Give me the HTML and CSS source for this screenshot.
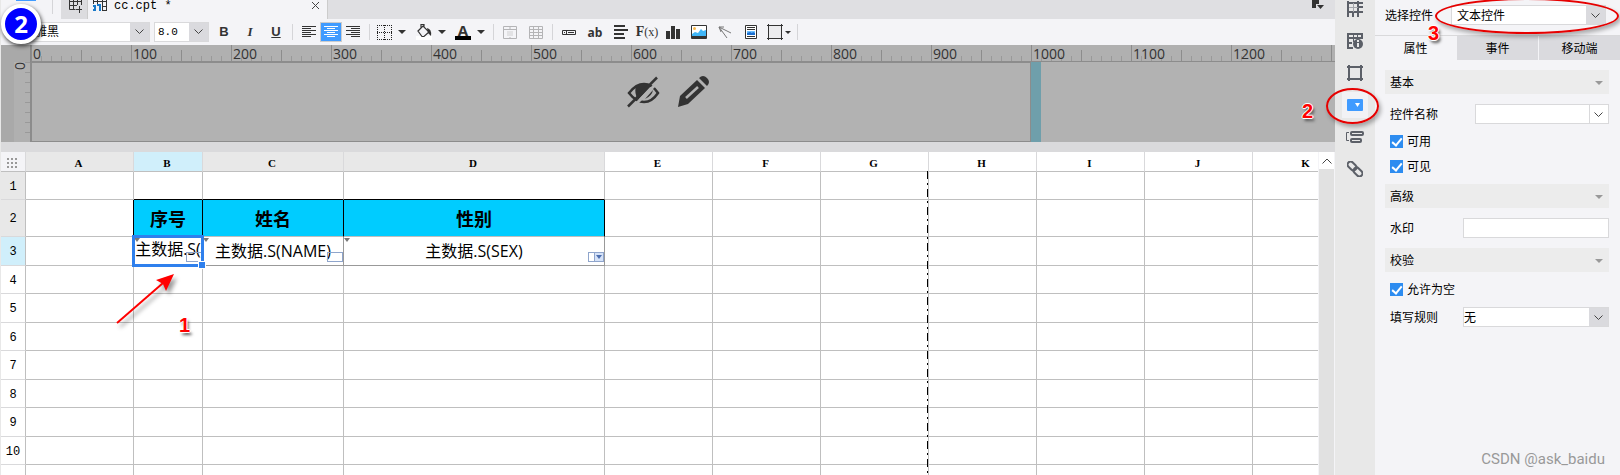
FILE: index.html
```html
<!DOCTYPE html>
<html lang="zh-CN">
<head>
	<meta charset="UTF-8">
	<title>cc.cpt</title>
	<link rel="stylesheet" href="styles.css">
</head>
<body>
	<div class="app">
		<main class="work">
			<div class="tabs">
				<span class="tab-line"><i></i></span>
				<button class="tab-new" aria-label="新建">
					<svg width="16" height="14" viewBox="0 0 16 14" fill="none" stroke="#333"><path d="M1.500 0v9.500h6M1 1.500h12.500M1 5.500h8M5.500 0v10M9.500 0v5M13.500 0v5M11.500 6v7M8 9.500h6"/></svg>
				</button>
				<div class="tab">
					<svg width="14" height="12" viewBox="0 0 14 12" fill="none" stroke="#333"><path d="M1 1.500h12.500M4.500 0v4M9.500 0v11M13.500 0v11M.5 0v4M9 6.500h4M9 10.500h4"/><path d="M0 6h2v4h-2M4 5h3v6" stroke="#1979c8" stroke-width="2"/></svg>
					<span class="tab-name">cc.cpt *</span>
					<button class="tab-close" aria-label="关闭"><svg width="9" height="9" viewBox="0 0 9 9" stroke="#444"><path d="M1 1l7 7M8 1l-7 7"/></svg></button>
				</div>
				<svg class="tab-more" width="12" height="9" viewBox="0 0 12 9" fill="#333"><path d="M0 0h7v4h-3v4h-4zM5 5h7l-3.500 4z"/></svg>
			</div>
			<div class="toolbar">
				<button class="combo font" aria-label="字体"><span>雅黑</span><i><svg width="9" height="6" viewBox="0 0 9 6"><path d="M.5 .5l4 4 4-4"/></svg></i></button>
				<button class="combo size" aria-label="字号"><span>8.0</span><i><svg width="9" height="6" viewBox="0 0 9 6"><path d="M.5 .5l4 4 4-4"/></svg></i></button>
				<button class="tool b">B</button>
				<button class="tool i">I</button>
				<button class="tool u">U</button>
				<span class="sep"></span>
				<div class="aligns">
					<button class="tool al" aria-label="左对齐"><svg width="14" height="12" viewBox="0 0 14 12"><path d="M0 .5h14M0 2.500h9M0 4.500h14M0 6.500h9M0 8.500h14M0 10.500h9"/></svg></button>
					<button class="tool al on" aria-label="居中"><svg width="14" height="12" viewBox="0 0 14 12"><path d="M0 .5h14M3 2.500h8M0 4.500h14M3 6.500h8M0 8.500h14M3 10.500h8"/></svg></button>
					<button class="tool al" aria-label="右对齐"><svg width="14" height="12" viewBox="0 0 14 12"><path d="M0 .5h14M5 2.500h9M0 4.500h14M5 6.500h9M0 8.500h14M5 10.500h9"/></svg></button>
				</div>
				<span class="sep"></span>
				<button class="tool drop" aria-label="边框"><svg width="15" height="15" viewBox="0 0 15 15" fill="none" stroke="#222"><path d="M0 .5h15M0 14.500h15M.5 0v15M14.500 0v15M7.500 0v15M0 7.500h15" stroke-dasharray="1 1"/></svg><b class="arr"></b></button>
				<button class="tool drop" aria-label="背景"><svg width="16" height="16" viewBox="0 0 16 16" fill="none" stroke="#333"><path d="M0 12h16v4h-16z" fill="#fff" stroke="none"/><path d="M2 7l5-5 6 6-5 4.500h-2zM5 5V.5h3V4" stroke-width="1.200"/><path d="M11 4q5 1 4 8l-3-3z" fill="#333" stroke="none"/></svg><b class="arr"></b></button>
				<button class="tool drop fore" aria-label="字体颜色"><span>A</span><b class="arr"></b></button>
				<span class="sep"></span>
				<button class="tool" aria-label="合并"><svg width="14" height="13" viewBox="0 0 14 13" fill="none" stroke="#b4b4b6"><path d="M.5 .5h13v12h-13zM0 3.500h14M7 0v3M7 11v2"/><path d="M4 5h6v5h-6z" fill="#e2e2e4" stroke="none"/></svg></button>
				<button class="tool" aria-label="取消合并"><svg width="14" height="13" viewBox="0 0 14 13" fill="none" stroke="#b4b4b6"><path d="M.5 .5h13v12h-13zM0 3.500h14M0 6.500h14M0 9.500h14M4.500 0v13M9.500 0v13"/></svg></button>
				<span class="sep"></span>
				<button class="tool" aria-label="控件"><svg width="14" height="5" viewBox="0 0 14 5" fill="none" stroke="#333"><path d="M.5 .5h13v4h-13zM4.500 0v5M6 2.500h6M2 2.500h1"/></svg></button>
				<button class="tool ab">ab</button>
				<button class="tool" aria-label="富文本"><svg width="14" height="14" viewBox="0 0 14 14" stroke="#333" stroke-width="2"><path d="M0 1h11M0 5h14M0 9h10M0 13h11"/></svg></button>
				<button class="tool fx">F<small>(x)</small></button>
				<button class="tool" aria-label="图表"><svg width="14" height="13" viewBox="0 0 14 13" fill="#333"><path d="M0 5h4v8h-4zM5 0h4v13h-4zM10 3h4v10h-4z"/></svg></button>
				<button class="tool" aria-label="图片"><svg width="16" height="14" viewBox="0 0 16 14"><path d="M.5 .5h15v13h-15z" fill="#fff" stroke="#333"/><path d="M1 9l3-2 3 1 3-4 2 2 3-1v6h-14z" fill="#3fb6f8"/><path d="M1 11h14v2h-14z" fill="#333"/><circle cx="3.500" cy="3.500" r="1.500" fill="#f8b84a"/></svg></button>
				<button class="tool" aria-label="斜线"><svg width="14" height="13" viewBox="0 0 14 13" fill="none" stroke="#777"><path d="M1 1l12 6M1 1l8 11M1 1l2 5M1 1l5 0"/></svg></button>
				<button class="tool" aria-label="子报表"><svg width="12" height="14" viewBox="0 0 12 14" fill="none" stroke="#333"><path d="M.5 .5h11v13h-11z" fill="#fff"/><path d="M2 2.500h8M2 4.500h8M2 11.500h8"/><path d="M2 6h8v4h-8z" fill="#6cc0ff" stroke="none"/><path d="M2 10v-2l3-1 2 1 1-1 2 1v2z" fill="#1c6fd0" stroke="none"/></svg></button>
				<button class="tool frame" aria-label="悬浮元素"><svg width="16" height="16" viewBox="0 0 16 16" fill="none" stroke="#333"><path d="M2 2h12v12h-12z" fill="#ececee" stroke="none"/><path d="M1.500 0v16M14.500 0v16M0 1.500h16M0 14.500h16"/></svg><b class="arr"></b></button>
				<span class="sep"></span>
			</div>
			<div class="canvas">
				<div class="corner"></div>
				<div class="ruler-x">
					<span>0</span><span>100</span><span>200</span><span>300</span><span>400</span><span>500</span><span>600</span><span>700</span><span>800</span><span>900</span><span>1000</span><span>1100</span><span>1200</span>
				</div>
				<div class="ruler-y"><span>0</span></div>
				<div class="body-area">
					<div class="paper">
						<svg width="33" height="32" viewBox="0 0 33 32" fill="none" stroke="#333" stroke-width="2.500"><path d="M2 17Q9 8 17 8T31 17Q25 26 17 26T2 17z"/><path d="M9 10Q17 5 24 10L11 24Q7 17 9 10zM26 14Q25 20 18 23z" fill="#333" stroke="none"/><path d="M4 33L33 4" stroke="#b2b2b2" stroke-width="3"/><path d="M1 30.500L30 1.500"/></svg>
						<svg width="31" height="31" viewBox="0 0 31 31" fill="#333"><path d="M0 31l2-11L19 4l8 8L10 28zM21 2q4-4 8 0t0 8z"/><path d="M8 22L20 11" stroke="#b2b2b2" stroke-width="2.500"/></svg>
					</div>
					<div class="edge"></div>
				</div>
			</div>
			<div class="sheet">
				<div class="grid">
					<table>
						<colgroup><col class="c-num"><col><col class="c-b"><col class="c-c"><col class="c-d"><col><col><col><col><col><col><col></colgroup>
						<thead>
							<tr><th class="all"><i></i></th><th class="used">A</th><th class="cur">B</th><th class="used">C</th><th class="used">D</th><th>E</th><th>F</th><th>G</th><th>H</th><th>I</th><th>J</th><th>K</th></tr>
						</thead>
						<tbody>
							<tr class="short"><th class="used">1</th><td></td><td class="over"></td><td class="over"></td><td class="over"></td><td></td><td></td><td></td><td></td><td></td><td></td><td></td></tr>
							<tr class="title"><th class="used">2</th><td class="pre"></td><td class="head">序号</td><td class="head">姓名</td><td class="head">性别</td><td></td><td></td><td></td><td></td><td></td><td></td><td></td></tr>
							<tr><th class="cur">3</th><td></td><td class="data sel">主数据.S(<i class="ext"></i><i class="box"></i><i class="knob"></i></td><td class="data">主数据.S(NAME)<i class="ext"></i><i class="box"></i></td><td class="data">主数据.S(SEX)<i class="ext"></i><i class="box list"></i></td><td></td><td></td><td></td><td></td><td></td><td></td><td></td></tr>
							<tr class="short"><th>4</th><td></td><td></td><td></td><td></td><td></td><td></td><td></td><td></td><td></td><td></td><td></td></tr>
							<tr><th>5</th><td></td><td></td><td></td><td></td><td></td><td></td><td></td><td></td><td></td><td></td><td></td></tr>
							<tr class="short"><th>6</th><td></td><td></td><td></td><td></td><td></td><td></td><td></td><td></td><td></td><td></td><td></td></tr>
							<tr><th>7</th><td></td><td></td><td></td><td></td><td></td><td></td><td></td><td></td><td></td><td></td><td></td></tr>
							<tr class="short"><th>8</th><td></td><td></td><td></td><td></td><td></td><td></td><td></td><td></td><td></td><td></td><td></td></tr>
							<tr><th>9</th><td></td><td></td><td></td><td></td><td></td><td></td><td></td><td></td><td></td><td></td><td></td></tr>
							<tr class="short"><th>10</th><td></td><td></td><td></td><td></td><td></td><td></td><td></td><td></td><td></td><td></td><td></td></tr>
							<tr><th></th><td></td><td></td><td></td><td></td><td></td><td></td><td></td><td></td><td></td><td></td><td></td></tr>
						</tbody>
					</table>
					<svg class="page-break" width="1" height="304"><path d="M.5 0v304" stroke="#000" stroke-dasharray="8 4 2 4"/></svg>
				</div>
				<div class="scroll"><button aria-label="向上"><svg width="10" height="6" viewBox="0 0 10 6"><path d="M.5 5.500l4.500-4.500 4.500 4.500"/></svg></button></div>
			</div>
		</main>
		<nav class="side">
			<button aria-label="单元格元素"><svg width="16" height="16" viewBox="0 0 16 16" fill="none" stroke="#5c6068" stroke-width="2"><path d="M1 0v16M0 2h16M0 11h16M11 0v16M11 6h5M6 11v5"/><path d="M6.500 2v9M2 6.500h9" stroke="#a4a6ab" stroke-width="1"/></svg></button>
			<button aria-label="单元格属性"><svg width="17" height="17" viewBox="0 0 17 17" fill="none" stroke="#5c6068" stroke-width="2"><path d="M6 15H1V1h14v5M1 5h13M1 10h4"/><path d="M6.500 1v8M10.500 1v4" stroke-width="1"/><circle cx="11" cy="11" r="5" fill="#5c6068" stroke="none"/><path d="M11 7v2M11 10v4" stroke="#e8e8e8"/></svg></button>
			<button aria-label="悬浮元素"><svg width="16" height="16" viewBox="0 0 16 16" fill="none" stroke="#5c6068" stroke-width="2"><path d="M2 2h12v12h-12z"/><path d="M0 2h4M2 0v4M12 2h4M14 0v4M0 14h4M2 12v4M12 14h4M14 12v4"/></svg></button>
			<button class="on" aria-label="控件设置"><svg width="16" height="12" viewBox="0 0 16 12"><rect width="16" height="12" rx="1" fill="#409bff"/><path d="M8 4h5l-2.500 4z" fill="#fff"/></svg></button>
			<button aria-label="条件属性"><svg width="18" height="14" viewBox="0 0 18 14" fill="none" stroke="#5c6068" stroke-width="2"><path d="M3 2.500H.5v8H3" stroke-width="1"/><rect x="5" y="2" width="12" height="3" rx="1"/><rect x="5" y="9" width="10" height="3" rx="1"/></svg></button>
			<button aria-label="超级链接"><svg width="16" height="16" viewBox="0 0 16 16" fill="none" stroke="#5c6068" stroke-width="2"><rect x="0" y="2" width="10" height="6" rx="3" transform="rotate(45 5 5)"/><rect x="6" y="8" width="10" height="6" rx="3" transform="rotate(45 11 11)"/></svg></button>
		</nav>
		<aside class="panel">
			<div class="choose">
				<label for="kind">选择控件</label>
				<div class="pick"><select id="kind"><option>文本控件</option></select><svg width="9" height="6" viewBox="0 0 9 6"><path d="M.5 .5l4 4 4-4"/></svg></div>
			</div>
			<div class="ptabs"><button class="on">属性</button><button>事件</button><button>移动端</button></div>
			<div class="props">
				<h3>基本<b class="arr"></b></h3>
				<div class="row"><label for="wname">控件名称</label><div class="pick name"><input id="wname" type="text"><svg width="9" height="6" viewBox="0 0 9 6"><path d="M.5 .5l4 4 4-4"/></svg></div></div>
				<label class="check"><input type="checkbox" checked>可用</label>
				<label class="check"><input type="checkbox" checked>可见</label>
				<h3>高级<b class="arr"></b></h3>
				<div class="row"><label for="mark">水印</label><input class="mark" id="mark" type="text"></div>
				<h3>校验<b class="arr"></b></h3>
				<label class="check"><input type="checkbox" checked>允许为空</label>
				<div class="row"><label for="rule">填写规则</label><div class="pick rule"><select id="rule"><option>无</option></select><svg width="9" height="6" viewBox="0 0 9 6"><path d="M.5 .5l4 4 4-4"/></svg></div></div>
			</div>
			<div class="watermark">CSDN @ask_baidu</div>
		</aside>
		<!-- 标注 -->
		<div class="badge">2</div>
		<svg class="note arrow" width="70" height="60" viewBox="0 0 70 60"><path d="M2 53L48 13" stroke="#f00" stroke-width="2"/><path d="M59 4l-8 17-3-7-7-4z" fill="#f00"/></svg>
		<span class="note num n1">1</span>
		<div class="note oval o2"></div>
		<span class="note num n2">2</span>
		<div class="note oval o3"></div>
		<span class="note num n3">3</span>
	</div>
</body>
</html>
```

FILE: styles.css
```css
* {
	margin: 0;
	padding: 0;
	box-sizing: border-box;
}
body {
	font: 12px/16px "Liberation Sans", "Noto Sans CJK SC", sans-serif;
	color: #000;
	overflow: hidden;
}
button, input, select {
	font: inherit;
	color: inherit;
	border: 0;
	background: none;
	border-radius: 0;
	appearance: none;
	outline: 0;
}
.app {
	position: relative;
	display: flex;
	height: 100vh;
	overflow: hidden;
	background: #f4f4f7;
}
.work {
	flex: 1;
	min-width: 0;
	display: flex;
	flex-direction: column;
	border-left: 1px solid #e8e8e8;
}
/* 文件标签 */
.tabs {
	display: flex;
	height: 19px;
	flex: none;
	background: #dfdfe2;
}
.tab-line {
	width: 60px;
	padding: 0 8px 0 15px;
	background: #f4f4f7;
}
.tab-line i {
	display: block;
	height: 14px;
	border-right: 1px solid #d5d5d8;
	background: linear-gradient(#409bff, #409bff) 0 0 / 20px 1px no-repeat;
}
.tab-new {
	width: 27px;
	display: flex;
	justify-content: center;
	padding-left: 4px;
	background: #dcdcdf;
	border-right: 1px solid #ccc;
}
.tab {
	width: 240px;
	display: flex;
	padding: 0 7px 0 5px;
	background: #f4f4f7;
	border-right: 1px solid #ccc;
}
.tab-name {
	flex: 1;
	padding-left: 7px;
	font: 12px/12px "Liberation Mono", monospace;
}
.tab-close {
	height: 10px;
}
.tab svg, .tab-more {
	display: block;
}
.tab-more {
	margin: 0 11px 0 auto;
}
/* 工具栏 */
.toolbar {
	display: flex;
	align-items: center;
	height: 26px;
	flex: none;
	padding-left: 14px;
}
.combo {
	display: flex;
	height: 20px;
	border: 1px solid #d9d9db;
	background: #fff;
	text-align: left;
}
.combo span {
	flex: 1;
	line-height: 18px;
}
.combo i {
	width: 19px;
	display: flex;
	align-items: center;
	justify-content: center;
	background: #dadade;
}
.combo path, .pick path, .scroll path {
	fill: none;
	stroke: #444;
}
.font {
	width: 135px;
	margin-right: 4px;
}
.font span {
	padding-left: 19px;
}
.size {
	width: 55px;
	margin-right: 2px;
}
.size span {
	padding-left: 3px;
	font: 11px/18px "Liberation Mono", monospace;
}
.tool {
	display: flex;
	flex: none;
	align-items: center;
	justify-content: center;
	width: 26px;
	height: 20px;
	color: #333;
}
.b {
	font-weight: bold;
	font-size: 13px;
}
.i {
	font: italic bold 13px "Liberation Serif", serif;
}
.u {
	text-decoration: underline;
	font-size: 13px;
	font-weight: bold;
}
.sep {
	width: 1px;
	height: 16px;
	margin: 0 3px;
	background: #d5d5d8;
}
.aligns {
	display: flex;
	padding: 0 2px;
}
.al {
	width: 22px;
}
.al path {
	stroke: #333;
}
.al.on {
	background: #409bff;
	border: 1px solid #ccc;
}
.al.on path {
	stroke: #fff;
}
.drop {
	width: 39px;
	gap: 6px;
	justify-content: flex-start;
	padding-left: 4px;
}
.arr {
	border: 4px solid transparent;
	border-top-color: #333;
	border-bottom: 0;
}
.fore span {
	width: 16px;
	border-bottom: 4px solid #000;
	font: bold 15px/12px "Open Sans", sans-serif;
}
.ab {
	font: bold 12px "Open Sans", sans-serif;
}
.fx {
	font: bold 14px "Liberation Serif", serif;
}
.fx small {
	font-size: 12px;
	font-weight: normal;
}
.frame {
	width: 30px;
	gap: 2px;
}
.frame .arr {
	border-width: 3px 3px 0;
}
/* 标尺和画布 */
.canvas {
	display: grid;
	grid-template-columns: 30px 1fr;
	grid-template-rows: 17px 80px;
	flex: none;
	background: #b2b2b2;
	color: #333;
	overflow: hidden;
}
.corner {
	background: #a9a9a9;
	border-right: 1px solid #888;
}
.ruler-x {
	display: flex;
	overflow: hidden;
	border-bottom: 1px solid #8c8c8c;
	background:
		repeating-linear-gradient(90deg, #8c8c8c 0 1px, transparent 1px 100px) 0 0 / 100% 100% no-repeat,
		repeating-linear-gradient(90deg, transparent 0 50px, #8c8c8c 50px 51px, transparent 51px 100px) 0 100% / 100% 11px no-repeat,
		repeating-linear-gradient(90deg, #999 0 1px, transparent 1px 10px) 0 100% / 100% 5px no-repeat,
		#b0b0b0;
}
.ruler-x span {
	flex: 0 0 100px;
	padding-left: 2px;
	font: 14px/18px "Open Sans", sans-serif;
}
.ruler-y {
	border-left: 13px solid #a9a9a9;
	border-right: 1px solid #8c8c8c;
	background: repeating-linear-gradient(#999 0 1px, transparent 1px 10px) 100% 0 / 5px 100% no-repeat, #b0b0b0;
}
.ruler-y span {
	display: block;
	width: 12px;
	writing-mode: vertical-rl;
	font: 14px/12px "Open Sans", sans-serif;
}
.body-area {
	display: flex;
}
.paper {
	display: flex;
	gap: 18px;
	width: 1000px;
	padding: 13px 0 0 595px;
	border: 1px solid #8c8c8c;
}
.edge {
	width: 10px;
	background: #6f9fab;
}
/* 表格 */
.sheet {
	flex: 1;
	display: flex;
	min-height: 0;
	border-top: 10px solid #dadadc;
}
.grid {
	position: relative;
	flex: 1;
	min-width: 0;
	overflow: hidden;
	background: #fff;
}
table {
	width: 1360px;
	table-layout: fixed;
	border-collapse: separate;
	border-spacing: 0;
}
col {
	width: 108px;
}
.c-num {
	width: 25px;
}
.c-b {
	width: 69px;
}
.c-c {
	width: 141px;
}
.c-d {
	width: 261px;
}
tr {
	height: 29px;
}
thead tr {
	height: 20px;
}
.short {
	height: 28px;
}
.title {
	height: 37px;
}
th, td {
	border-right: 1px solid #bfbfbf;
	border-bottom: 1px solid #bfbfbf;
	text-align: center;
	white-space: nowrap;
}
th {
	padding-top: 2px;
	font: 12px/16px "Liberation Mono", monospace;
}
thead th {
	padding-right: 2px;
	font: bold 11px/16px "Liberation Serif", serif;
	border-right-color: #d9d9db;
}
tbody th {
	border-bottom-color: #d9d9db;
}
.used {
	background: #e8e8e8;
}
.cur {
	background: #d0effb;
}
.all {
	background: #f4f4f7;
}
.all i {
	display: block;
	width: 10px;
	height: 10px;
	margin: 0 auto;
	background: repeating-linear-gradient(90deg, transparent 0 2px, #f4f4f7 2px 4px), repeating-linear-gradient(#999 0 2px, #f4f4f7 2px 4px);
}
.over {
	border-bottom-color: #000;
}
.pre {
	border-right-color: #000;
}
.head {
	background: #0cf;
	border-right-color: #000;
	font: bold 18px/24px "Noto Sans CJK SC", sans-serif;
}
.data {
	position: relative;
	border-color: #999;
	font: 16px/24px "Open Sans", "Noto Sans CJK SC", sans-serif;
}
.sel {
	padding-bottom: 4px;
}
.sel::after {
	content: "";
	position: absolute;
	inset: -2px;
	border: 3px solid #2f80ed;
}
.ext {
	position: absolute;
	top: 1px;
	left: 0;
	border: 3px solid transparent;
	border-top: 4px solid #777;
	border-bottom: 0;
}
.box {
	position: absolute;
	right: 0;
	bottom: 3px;
	width: 16px;
	height: 10px;
	border: 1px solid #8fa5cc;
}
.list {
	background: linear-gradient(90deg, #fff 5px, #8fa5cc 5px 6px, #d5e2f8 6px);
}
.list::after {
	content: "";
	position: absolute;
	top: 2px;
	right: 1px;
	border: 3px solid transparent;
	border-top: 4px solid #4d6fb0;
	border-bottom: 0;
}
.knob {
	position: absolute;
	z-index: 1;
	right: -3px;
	bottom: -3px;
	width: 6px;
	height: 6px;
	background: #2f80ed;
	outline: 1px solid #fff;
}
.page-break {
	position: absolute;
	top: 19px;
	left: 926px;
}
.scroll {
	width: 17px;
	background: #e1e1e1;
	border-left: 1px solid #f4f4f7;
	border-right: 1px solid #f4f4f7;
}
.scroll button {
	display: flex;
	align-items: center;
	justify-content: center;
	width: 100%;
	height: 17px;
	background: #fff;
}
/* 右侧图标栏 */
.side {
	flex: 0 0 40px;
	background: #e8e8e8;
}
.side button {
	display: flex;
	align-items: center;
	justify-content: center;
	width: 40px;
	height: 32px;
}
.side button:first-child {
	height: 25px;
	padding-bottom: 7px;
}
.side .on {
	background: linear-gradient(#f2f2f5, #f2f2f5) center / 26px 26px no-repeat;
}
/* 属性面板 */
.panel {
	flex: 0 0 245px;
	position: relative;
}
.choose {
	display: flex;
	justify-content: space-between;
	height: 35px;
	padding: 5px 14px 0 10px;
}
.choose label {
	line-height: 22px;
}
.pick {
	position: relative;
	display: flex;
	width: 155px;
	height: 20px;
	border: 1px solid #d9d9db;
	background: linear-gradient(90deg, transparent calc(100% - 19px), #dadade 0), #fff;
}
.pick select, .pick input {
	width: 100%;
	padding: 1px 0 0 5px;
}
.pick svg {
	position: absolute;
	right: 5px;
	top: 7px;
	pointer-events: none;
}
.ptabs {
	display: grid;
	grid-template-columns: repeat(3, 1fr);
	gap: 1px;
	height: 25px;
	border-top: 1px solid #d9d9db;
}
.ptabs button {
	padding-top: 2px;
	background: #dadade;
}
.ptabs .on {
	background: #f4f4f7;
}
.props {
	padding: 10px 11px 0 10px;
}
.props h3 {
	display: flex;
	align-items: center;
	justify-content: space-between;
	height: 24px;
	padding: 2px 6px 0 5px;
	background: #ececec;
	font: inherit;
}
.props .arr {
	border-top-color: #999;
}
.row {
	display: flex;
	align-items: center;
	justify-content: space-between;
	height: 20px;
	margin: 10px 0;
	padding-left: 5px;
}
.row label {
	padding-top: 1px;
}
.name {
	width: 134px;
	background: linear-gradient(90deg, transparent calc(100% - 19px), #d9d9db 0 calc(100% - 18px), transparent 0), #fff;
}
.mark {
	width: 146px;
	height: 20px;
	border: 1px solid #d9d9db;
	background: #fff;
}
.rule {
	width: 146px;
}
.pick.rule select {
	padding-left: 0;
}
.check {
	display: flex;
	align-items: center;
	gap: 4px;
	height: 15px;
	margin: 10px 0 10px 5px;
}
.check input {
	width: 13px;
	height: 13px;
	background: #2d8cf0;
}
.check input:checked::after {
	content: "";
	display: block;
	width: 4px;
	height: 8px;
	margin: 1px 0 0 4px;
	border: solid #fff;
	border-width: 0 2px 2px 0;
	transform: rotate(40deg);
}
.watermark {
	position: absolute;
	right: 15px;
	bottom: 6px;
	font: 15px/20px Roboto, sans-serif;
	color: #999;
}
/* 标注 */
.badge {
	position: absolute;
	top: 4px;
	left: 1px;
	width: 40px;
	height: 40px;
	border: 4px solid #fff;
	border-radius: 50%;
	background: #00f;
	box-shadow: 1px 2px 4px #333;
	color: #fff;
	text-align: center;
	font: bold 24px/32px "Open Sans", sans-serif;
}
.note {
	position: absolute;
}
.arrow {
	top: 270px;
	left: 115px;
	filter: drop-shadow(3px 4px 2px rgba(0,0,0,.4));
}
.num {
	color: #f00;
	font: bold 20px/20px "Liberation Sans", sans-serif;
	text-shadow: 1px 0 #fff, -1px 0 #fff, 0 1px #fff, 0 -1px #fff, 2px 3px 3px #555;
}
.oval {
	border: 2px solid #e60000;
	border-radius: 50%;
	box-shadow: 2px 3px 4px rgba(0,0,0,.3);
}
.n1 {
	top: 315px;
	left: 179px;
}
.n2 {
	top: 101px;
	left: 1302px;
}
.n3 {
	top: 23px;
	left: 1428px;
}
.o2 {
	top: 88px;
	left: 1326px;
	width: 53px;
	height: 36px;
}
.o3 {
	top: -2px;
	left: 1435px;
	width: 184px;
	height: 36px;
}
```
